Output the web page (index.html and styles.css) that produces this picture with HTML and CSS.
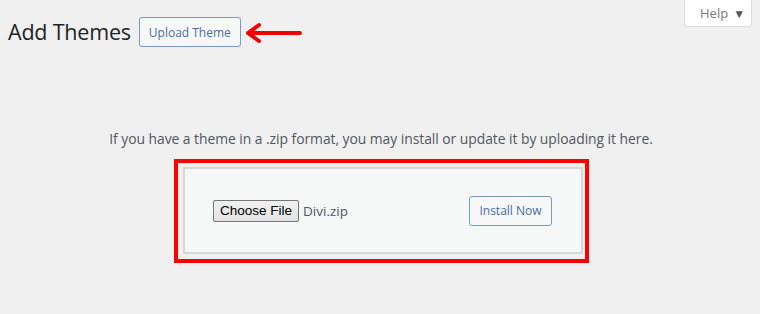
FILE: index.html
```html
<!DOCTYPE html>
<html>
<head>
<meta charset="utf-8">
<link rel="stylesheet" href="styles.css">
</head>
<body>
<div class="screen-meta">
  <button class="help-tab">Help <span class="caret">▼</span></button>
</div>
<div class="wrap">
  <div class="title-row">
    <h1 class="title">Add Themes</h1>
    <a class="upload-btn">Upload Theme</a>
    <svg class="arrow" width="62" height="24" viewBox="0 0 62 24">
      <path d="M6 12 L58 12 M6 12 L17 4 M6 12 L17 20" fill="none" stroke="#f00000" stroke-width="4" stroke-linecap="round" stroke-linejoin="round"/>
    </svg>
  </div>
  <p class="install-help">If you have a theme in a .zip format, you may install or update it by uploading it here.</p>
  <div class="highlight">
    <div class="upload-form">
      <div class="file-field">
        <span class="choose-btn">Choose File</span>
        <span class="file-name">Divi.zip</span>
      </div>
      <span class="install-btn">Install Now</span>
    </div>
  </div>
</div>
</body>
</html>
```
FILE: styles.css
```css
html, body {
  margin: 0;
  padding: 0;
  background: #f0f0f1;
}
body {
  font-family: "Open Sans", "Noto Sans", sans-serif;
  color: #1d2327;
  width: 760px;
  height: 314px;
  overflow: hidden;
}
.screen-meta {
  float: right;
  margin-right: 8px;
}
.help-tab {
  display: flex;
  align-items: center;
  gap: 5px;
  height: 27px;
  width: 68px;
  box-sizing: border-box;
  padding: 0 0 0 15px;
  margin: 0;
  background: #fff;
  border: 1px solid #dcdcde;
  border-top: none;
  border-radius: 0 0 4px 4px;
  font-family: "Open Sans", sans-serif;
  font-size: 13px;
  color: #787c82;
}
.caret {
  font-size: 12px;
  color: #50575e;
}
.wrap {
  padding: 17px 0 0 8px;
}
.title-row {
  display: flex;
  align-items: center;
  height: 30px;
}
.title {
  margin: 0;
  font-size: 21.5px;
  font-weight: 400;
  line-height: 30px;
  color: #1d2327;
  letter-spacing: -0.2px;
}
.upload-btn {
  margin-left: 8px;
  height: 30px;
  width: 102px;
  box-sizing: border-box;
  padding: 0;
  display: flex;
  align-items: center;
  justify-content: center;
  border: 1px solid #7a98c4;
  border-radius: 3px;
  background: #f6f7f7;
  color: #4a6ea8;
  font-size: 12px;
}
.arrow {
  margin-left: 1px;
  margin-top: 2px;
}
.install-help {
  margin: 82px 0 0 -6px;
  text-align: center;
  font-size: 13.9px;
  letter-spacing: -0.05px;
  color: #50575e;
  line-height: 20px;
}
.highlight {
  width: 415px;
  box-sizing: border-box;
  margin: 10px 0 0 166px;
  border: 4px solid #ff0000;
  padding: 4px 2px 5px 5px;
}
.upload-form {
  width: 400px;
  height: 87px;
  box-sizing: border-box;
  border: 2px solid #d6d7d8;
  background: #f6f7f7;
  padding: 0 29px 0 28px;
  display: flex;
  align-items: center;
  justify-content: space-between;
}
.file-field {
  display: flex;
  align-items: center;
  gap: 4px;
}
.choose-btn {
  font-family: "Liberation Sans", Arial, sans-serif;
  font-size: 13.5px;
  color: #000;
  border: 1px solid #767676;
  border-radius: 2px;
  padding: 2px 6px;
  line-height: 16px;
  background: linear-gradient(#f0f0f0, #e3e3e3);
}
.file-name {
  font-size: 13.5px;
  color: #50575e;
}
.install-btn {
  height: 30px;
  width: 83px;
  box-sizing: border-box;
  padding: 0;
  display: flex;
  align-items: center;
  justify-content: center;
  border: 1px solid #7a98c4;
  border-radius: 3px;
  background: #f6f7f7;
  color: #4a6ea8;
  font-size: 12px;
}
```
